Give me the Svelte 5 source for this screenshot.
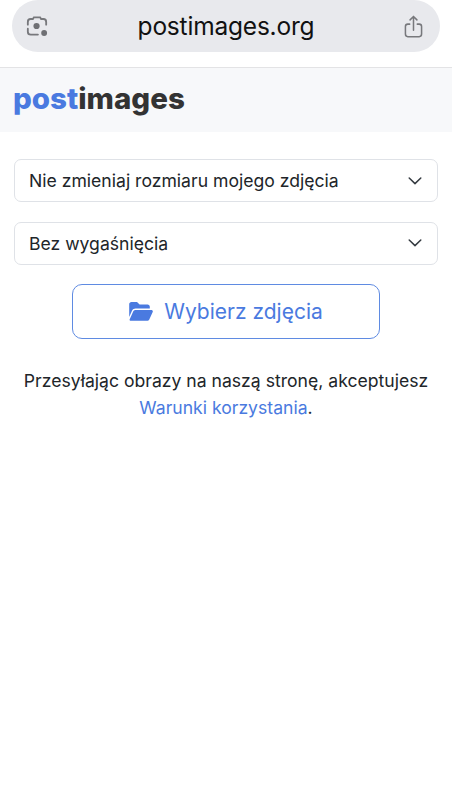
<script>
  let resize = "Nie zmieniaj rozmiaru mojego zdjęcia";
  let expiry = "Bez wygaśnięcia";
</script>

<div class="page">
  <div class="browser">
    <div class="urlbar">
      <svg class="lens" viewBox="0 0 24 24" width="22" height="22" fill="none" stroke="#77787c" stroke-width="2" stroke-linecap="round">
        <path d="M2 10.5V7.5C2 5.5 3.2 4.4 5 4.4H7.5L8.6 2.6H15.4L16.5 4.4H19C20.8 4.4 22 5.5 22 7.5V10.5" />
        <path d="M2 15V18.2C2 20.2 3.3 21.4 5.2 21.4H13" />
        <circle cx="11.5" cy="12" r="3.4" fill="#6f7074" stroke="none" />
        <circle cx="19.8" cy="19.6" r="3.2" fill="#6f7074" stroke="none" />
      </svg>
      <span class="url">postimages.org</span>
      <svg class="share" viewBox="0 0 20 24" width="19" height="23" fill="none" stroke="#77787c" stroke-width="1.6" stroke-linecap="round" stroke-linejoin="round">
        <path d="M6 9.5H4C2.6 9.5 1.5 10.6 1.5 12V20C1.5 21.6 2.6 22.7 4 22.7H16C17.4 22.7 18.5 21.6 18.5 20V12C18.5 10.6 17.4 9.5 16 9.5H14" />
        <path d="M10 16V1.6M6.4 5 10 1.4 13.6 5" />
      </svg>
    </div>
  </div>

  <header class="site-header">
    <span class="logo"><span class="post">post</span>images</span>
  </header>

  <main class="content">
    <div class="select">
      <span>{resize}</span>
      <svg viewBox="0 0 16 16" width="16" height="16" fill="none" stroke="#343a40" stroke-width="1.5" stroke-linecap="round" stroke-linejoin="round"><path d="M2.2 5 8 10.6 13.8 5" /></svg>
    </div>
    <div class="select">
      <span>{expiry}</span>
      <svg viewBox="0 0 16 16" width="16" height="16" fill="none" stroke="#343a40" stroke-width="1.5" stroke-linecap="round" stroke-linejoin="round"><path d="M2.2 5 8 10.6 13.8 5" /></svg>
    </div>

    <button class="choose">
      <svg viewBox="0 0 24 19" width="24" height="19" fill="#4a7ae0">
        <path d="M0.2 9.6V2.2C0.2 1 1.2 0 2.4 0H8L10.6 2.6H18.6C19.8 2.6 20.8 3.6 20.8 4.8V6.4H6.6C5 6.4 3.6 7.3 3 8.7L0.2 15Z" />
        <path d="M6.6 7.9H22.4C23.5 7.9 24.2 9 23.7 10L20.4 17.2C20 18.2 19 18.8 17.9 18.8H1.7C0.9 18.8 0.3 18 0.7 17.2L4.2 9.4C4.7 8.4 5.6 7.9 6.6 7.9Z" />
      </svg>
      Wybierz zdjęcia
    </button>

    <p class="terms">Przesyłając obrazy na naszą stronę, akceptujesz <a href="#terms">Warunki korzystania</a>.</p>
  </main>
</div>

<style>
  :global(body) {
    background: #fff;
  }

  .page {
    width: 452px;
    height: 800px;
    overflow: hidden;
    font-family: Inter, "Liberation Sans", sans-serif;
    color: #212529;
  }

  .browser {
    height: 68px;
    padding: 0 12px;
    box-sizing: border-box;
    border-bottom: 1px solid #e3e3e5;
  }

  .urlbar {
    height: 52px;
    background: #e8e9ed;
    border-radius: 26px;
    display: flex;
    align-items: center;
    justify-content: space-between;
    padding: 0 17px 0 14px;
  }

  .url {
    font-size: 24.5px;
    color: #111;
    letter-spacing: -0.2px;
  }

  .site-header {
    height: 64px;
    background: #f7f8fa;
    padding-left: 13px;
    display: flex;
    align-items: center;
  }

  .logo {
    font-weight: 800;
    font-size: 29.5px;
    color: #333;
    margin-top: -4px;
  }

  .post {
    color: #4a7ae0;
  }

  .content {
    padding: 27px 14px 0;
    display: flex;
    flex-direction: column;
    align-items: center;
  }

  .select {
    width: 100%;
    height: 43px;
    box-sizing: border-box;
    border: 1px solid #dfe2e7;
    border-radius: 7px;
    padding: 0 14px;
    margin-bottom: 19.5px;
    display: flex;
    align-items: center;
    justify-content: space-between;
    font-size: 17.6px;
  }

  .choose {
    width: 308px;
    height: 55px;
    border: 1.5px solid #5f8be2;
    border-radius: 10px;
    background: #fff;
    color: #4a7ae0;
    font-family: inherit;
    font-size: 21px;
    display: flex;
    align-items: center;
    justify-content: center;
    gap: 11px;
  }

  .terms {
    margin: 28px 0 0;
    text-align: center;
    font-size: 17.6px;
    line-height: 27px;
  }

  .terms a {
    color: #4a7ae0;
    text-decoration: none;
  }
</style>
